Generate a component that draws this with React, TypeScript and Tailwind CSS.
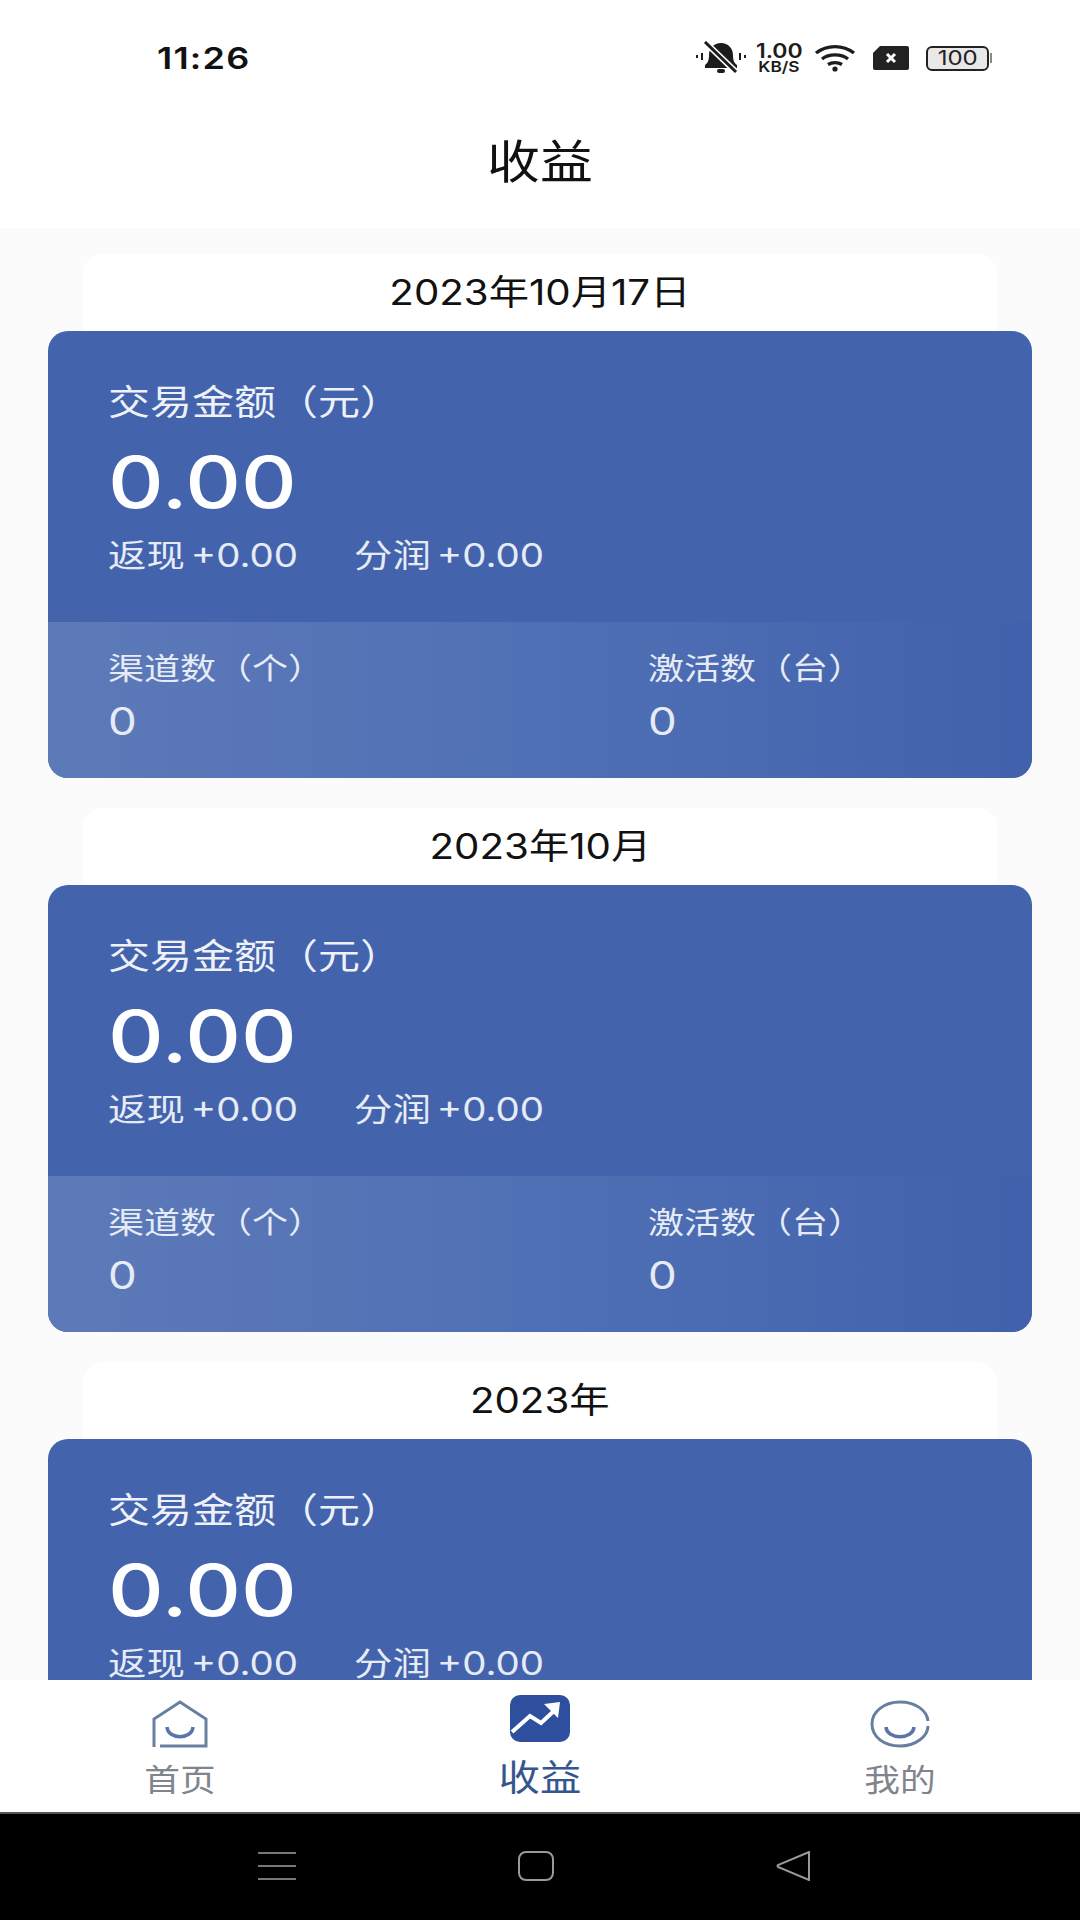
import React from "react";

const FONT = { fontFamily: '"Inter", "Noto Sans CJK SC", sans-serif' };

function BellOff() {
  return (
    <svg width="50" height="34" viewBox="0 0 50 34" fill="none">
      <path d="M9 24c3-2 4-5 4-10 0-7 5-12 12-12s12 5 12 12c0 5 1 8 4 10v3H9z" fill="#1c1c1c" />
      <rect x="21" y="28" width="8" height="4" rx="2" fill="#1c1c1c" />
      <path d="M9 1l31 30" stroke="#fff" strokeWidth="6" />
      <path d="M9 1l31 30" stroke="#1c1c1c" strokeWidth="3" />
      <path d="M1 14v3M6 12v7M44 12v7M49 14v3" stroke="#1c1c1c" strokeWidth="2" />
    </svg>
  );
}

function Wifi() {
  return (
    <svg width="42" height="28" viewBox="0 0 42 28" fill="none" stroke="#1c1c1c" strokeWidth="3.4">
      <path d="M2 9c11-8.500 27-8.500 38 0" />
      <path d="M8 15c7-5.500 19-5.500 26 0" />
      <path d="M14 20.500c4-2.500 10-2.500 14 0" />
      <circle cx="21" cy="25" r="2.600" fill="#1c1c1c" stroke="none" />
    </svg>
  );
}

function SimOff() {
  return (
    <svg width="36" height="24" viewBox="0 0 36 24">
      <path d="M7 0h27a2 2 0 0 1 2 2v20a2 2 0 0 1-2 2H2a2 2 0 0 1-2-2V7z" fill="#222" />
      <path d="M14 8l8 8M22 8l-8 8" stroke="#fff" strokeWidth="3" />
    </svg>
  );
}

function Battery() {
  return (
    <div className="flex items-center">
      <div className="w-[63px] h-[25px] rounded-[6px] border-2 border-[#222] bg-[#e8e8e8] flex items-center justify-center text-[20px] leading-none text-[#222]">
        <span className="inline-block scale-x-[1.2]">100</span>
      </div>
      <div className="w-[2px] h-[10px] bg-[#888] ml-[1px]" />
    </div>
  );
}

function HomeIcon() {
  return (
    <svg width="56" height="48" viewBox="0 0 56 48" fill="none" stroke="#68809f" strokeWidth="3">
      <path d="M2 47V19L28 2l26 17v27H8" />
      <path d="M15 27c1 13 25 13 26 0" strokeWidth="3.500" stroke="#5a75a8" />
    </svg>
  );
}

function ActiveIcon() {
  return (
    <svg width="60" height="47" viewBox="0 0 60 47">
      <rect width="60" height="47" rx="10" fill="#2d4f9e" />
      <path d="M2 37l18-16 11 7 14-13" fill="none" stroke="#fff" strokeWidth="4" />
      <path d="M34 9l16-2-2 16z" fill="#fff" />
    </svg>
  );
}

function FaceIcon() {
  return (
    <svg width="60" height="48" viewBox="0 0 60 48" fill="none" stroke="#68809f" strokeWidth="3">
      <path d="M58 21C57 10 45 2 30 2S2 11 2 24s12 22 28 22 28-10 28-20" />
      <path d="M16 27c1 13 27 13 28 0" strokeWidth="3.500" stroke="#5a75a8" />
    </svg>
  );
}

function Stretch({ children, className }: { children: React.ReactNode; className: string }) {
  return <span className={`block origin-left scale-x-[1.2] whitespace-nowrap ${className}`}>{children}</span>;
}

function Card({ label }: { label: string }) {
  return (
    <section className="mb-[30px]">
      <div className="mx-[83px] h-[77px] bg-white rounded-t-[20px] flex items-center justify-center">
        <span className="inline-block scale-x-[1.15] text-[35px] leading-none text-[#111]">{label}</span>
      </div>
      <div className="mx-[48px] rounded-[20px] overflow-hidden bg-[#4363ad] text-white">
        <div className="h-[291px] pl-[60px] pt-[49px]">
          <Stretch className="text-[35px] leading-[44px] text-[#eef1f8]">交易金额（元）</Stretch>
          <Stretch className="text-[72px] leading-[80px] mt-[18px] font-medium">0.00</Stretch>
          <div className="flex mt-[14px] text-[#e6ebf5]">
            <div className="w-[246px]">
              <Stretch className="text-[32px] leading-[40px] [word-spacing:-4px]">返现 +0.00</Stretch>
            </div>
            <div>
              <Stretch className="text-[32px] leading-[40px] [word-spacing:-4px]">分润 +0.00</Stretch>
            </div>
          </div>
        </div>
        <div className="h-[156px] pl-[60px] pt-[25px] flex bg-gradient-to-r from-[#5d7ab8] via-[#5070b5] to-[#4161ac]">
          <div className="w-[540px] text-[#e6ebf5]">
            <Stretch className="text-[30px] leading-[42px]">渠道数（个）</Stretch>
            <Stretch className="text-[38px] leading-[42px] mt-[11px]">0</Stretch>
          </div>
          <div className="text-[#e6ebf5]">
            <Stretch className="text-[30px] leading-[42px]">激活数（台）</Stretch>
            <Stretch className="text-[38px] leading-[42px] mt-[11px]">0</Stretch>
          </div>
        </div>
      </div>
    </section>
  );
}

export default function App() {
  return (
    <div className="w-[1080px] h-[1920px] flex flex-col overflow-hidden bg-white" style={FONT}>
      {/* status bar */}
      <header className="h-[114px] shrink-0 flex items-center justify-between pl-[157px] pr-[88px] pt-[2px]">
        <Stretch className="text-[30px] leading-none font-semibold text-[#111] tracking-[1px]">11:26</Stretch>
        <div className="flex items-center">
          <BellOff />
          <div className="ml-[8px] w-[50px] text-[#1c1c1c] font-semibold flex flex-col items-center">
            <span className="inline-block scale-x-[1.15] text-[20px] leading-[18px]">1.00</span>
            <span className="inline-block scale-x-[1.15] text-[15px] leading-[14px]">KB/S</span>
          </div>
          <div className="ml-[10px]"><Wifi /></div>
          <div className="ml-[17px]"><SimOff /></div>
          <div className="ml-[17px]"><Battery /></div>
        </div>
      </header>

      {/* title */}
      <div className="h-[114px] shrink-0 flex justify-center pt-[17px]">
        <span className="inline-block scale-x-[1.15] text-[46px] leading-[60px] text-[#111]">收益</span>
      </div>

      {/* list */}
      <main className="flex-1 min-h-0 overflow-hidden bg-[#fbfbfb] pt-[26px]">
        <Card label="2023年10月17日" />
        <Card label="2023年10月" />
        <Card label="2023年" />
      </main>

      {/* tab bar */}
      <nav className="h-[134px] shrink-0 bg-white grid grid-cols-3 border-b-2 border-b-[#555]">
        <div className="flex flex-col items-center pt-[20px]">
          <HomeIcon />
          <span className="mt-[12px] inline-block scale-x-[1.15] text-[31px] leading-[40px] text-[#80848c]">首页</span>
        </div>
        <div className="flex flex-col items-center pt-[15px]">
          <ActiveIcon />
          <span className="mt-[11px] inline-block scale-x-[1.15] text-[36px] leading-[50px] text-[#34568f]">收益</span>
        </div>
        <div className="flex flex-col items-center pt-[20px]">
          <FaceIcon />
          <span className="mt-[12px] inline-block scale-x-[1.15] text-[31px] leading-[40px] text-[#80848c]">我的</span>
        </div>
      </nav>

      {/* android nav */}
      <footer className="h-[106px] shrink-0 bg-black flex items-center justify-center gap-[222px] pb-[2px] pr-[12px]">
        <svg width="38" height="30" viewBox="0 0 38 30" stroke="#777" strokeWidth="2">
          <path d="M0 2h38M0 15h38M0 28h38" />
        </svg>
        <svg width="36" height="30" viewBox="0 0 36 30" fill="none" stroke="#999" strokeWidth="2">
          <rect x="1" y="1" width="34" height="28" rx="7" />
        </svg>
        <svg width="34" height="30" viewBox="0 0 34 30" fill="none" stroke="#999" strokeWidth="2">
          <path d="M33 1v28L2 16a1.500 1.500 0 0 1 0-2z" />
        </svg>
      </footer>
    </div>
  );
}
